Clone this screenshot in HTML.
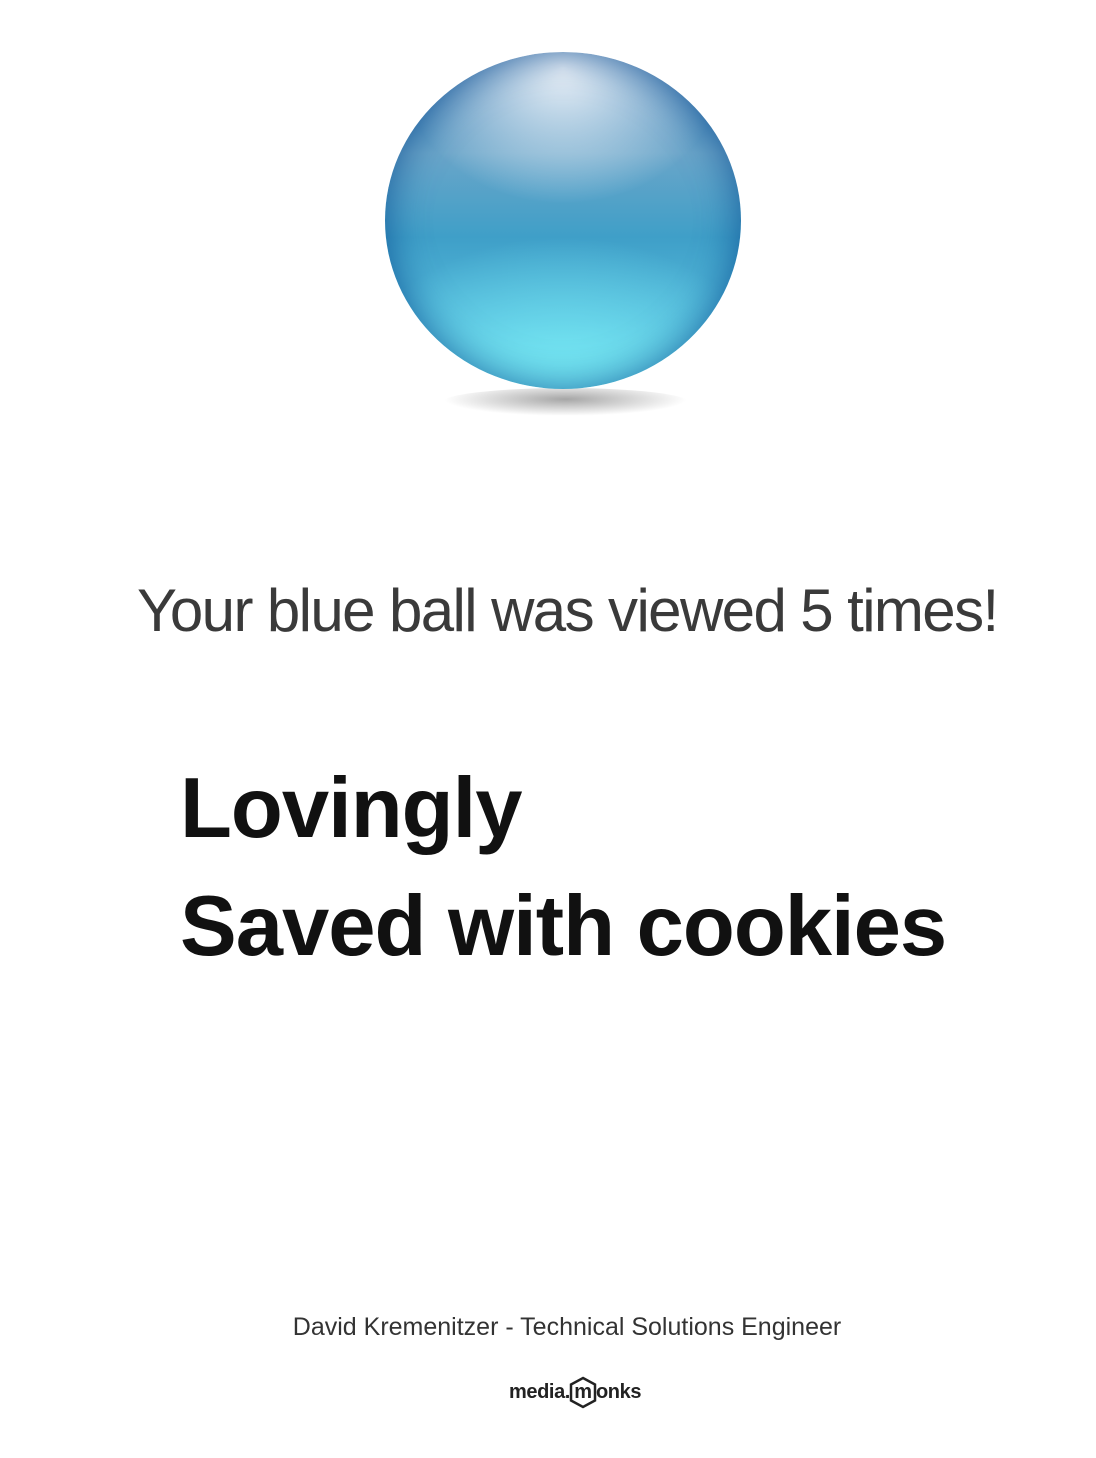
<!DOCTYPE html>
<html><head><style>
html,body{margin:0;padding:0;background:#fff;width:1096px;height:1458px;overflow:hidden;position:relative;font-family:"Liberation Sans",sans-serif}
.ball{position:absolute;left:385px;top:52px;width:356px;height:337px;border-radius:50%;
background:radial-gradient(ellipse 60% 45% at 50% 100%,rgba(120,235,245,0.95),rgba(120,235,245,0) 100%),
radial-gradient(ellipse 45% 40% at 50% 5%,rgba(240,245,250,1),rgba(240,245,250,0) 100%),
linear-gradient(#3f7fb5 0%,#6aa5c9 30%,#3f9fc8 55%,#55bcdc 80%,#70dfee 100%);
box-shadow:inset 0 0 40px rgba(5,70,140,0.75)}
.shadow{position:absolute;left:443px;top:388px;width:245px;height:28px;border-radius:50%;background:radial-gradient(ellipse at 50% 40%,rgba(0,0,0,0.35),rgba(0,0,0,0) 70%)}
.t1{position:absolute;left:137px;top:576px;font-size:60px;color:#3a3a3a;letter-spacing:-1.6px;white-space:nowrap}
.big{position:absolute;left:180px;font-weight:bold;font-size:85px;color:#111;letter-spacing:-1px;white-space:nowrap}
.foot{position:absolute;left:0;width:1134px;text-align:center;top:1313px;font-size:25px;color:#333}
.logo{position:absolute;left:509px;top:1381px;font-weight:bold;font-size:20px;color:#222;letter-spacing:-0.4px}
</style></head><body>
<div class="shadow"></div>
<div class="ball"></div>
<div class="t1">Your blue ball was viewed 5 times!</div>
<div class="big" style="top:760px">Lovingly</div>
<div class="big" style="top:878px">Saved with cookies</div>
<div class="foot">David Kremenitzer - Technical Solutions Engineer</div>
<div class="logo">media.<span style="position:relative;display:inline-block;width:26px;text-align:center">m<svg style="position:absolute;left:-1px;top:-5px" width="28" height="33" viewBox="0 0 28 33"><path d="M14 2 L26 8.5 L26 24.5 L14 31 L2 24.5 L2 8.5 Z" fill="none" stroke="#222" stroke-width="2.5"/></svg></span>onks</div>
</body></html>
